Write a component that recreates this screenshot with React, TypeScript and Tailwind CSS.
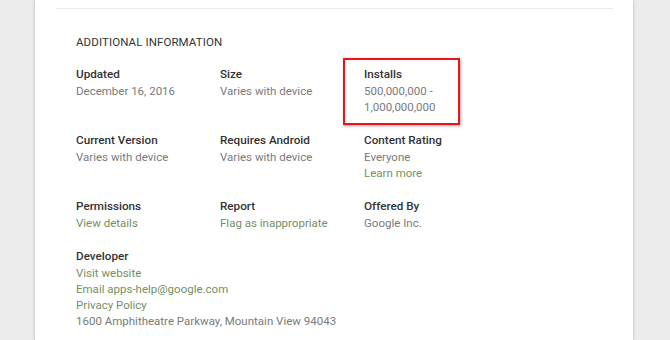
import React from "react";

type Item = { title: string; lines: { text: string; link?: boolean }[]; highlight?: boolean };

const rows: Item[][] = [
  [
    { title: "Updated", lines: [{ text: "December 16, 2016" }] },
    { title: "Size", lines: [{ text: "Varies with device" }] },
    { title: "Installs", lines: [{ text: "500,000,000 -" }, { text: "1,000,000,000" }], highlight: true },
  ],
  [
    { title: "Current Version", lines: [{ text: "Varies with device" }] },
    { title: "Requires Android", lines: [{ text: "Varies with device" }] },
    { title: "Content Rating", lines: [{ text: "Everyone" }, { text: "Learn more", link: true }] },
  ],
  [
    { title: "Permissions", lines: [{ text: "View details", link: true }] },
    { title: "Report", lines: [{ text: "Flag as inappropriate", link: true }] },
    { title: "Offered By", lines: [{ text: "Google Inc." }] },
  ],
  [
    {
      title: "Developer",
      lines: [
        { text: "Visit website", link: true },
        { text: "Email apps-help@google.com", link: true },
        { text: "Privacy Policy", link: true },
        { text: "1600 Amphitheatre Parkway, Mountain View 94043" },
      ],
    },
  ],
];

function Meta({ item }: { item: Item }) {
  return (
    <div className="relative w-[144px] flex flex-col">
      {item.highlight && (
        <div className="absolute left-[-21px] top-[-8px] w-[117px] h-[67px] border-2 border-[#e8141c] shadow-[1px_1px_3px_rgba(0,0,0,0.35)] pointer-events-none" />
      )}
      <div className="text-[11.7px] leading-[17px] font-medium text-[#333] whitespace-nowrap">{item.title}</div>
      {item.lines.map((l, i) => (
        <div
          key={i}
          className={`text-[11.5px] leading-[16px] whitespace-nowrap ${l.link ? "text-[#72905f]" : "text-[#7a7a7a]"}`}
        >
          {l.text}
        </div>
      ))}
    </div>
  );
}

export default function App() {
  return (
    <div className="w-[670px] h-[340px] bg-[#ececec] overflow-hidden" style={{ fontFamily: "Roboto, 'Liberation Sans', sans-serif" }}>
      <div className="ml-[35px] w-[598px] h-full bg-white shadow-[0_0_3px_rgba(0,0,0,0.25)] pt-[8px]">
        <div className="ml-[21px] mr-[20px] h-px bg-[#eaeaea]" />
        <div className="pl-[41px] pt-[26px]">
          <div className="text-[11.5px] leading-[14px] text-[#333] uppercase tracking-[0.1px]">Additional Information</div>
          <div className="mt-[17px] flex flex-col gap-[17px]">
            {rows.map((r, i) => (
              <div key={i} className="flex">
                {r.map((it, j) => (
                  <Meta key={j} item={it} />
                ))}
              </div>
            ))}
          </div>
        </div>
      </div>
    </div>
  );
}
